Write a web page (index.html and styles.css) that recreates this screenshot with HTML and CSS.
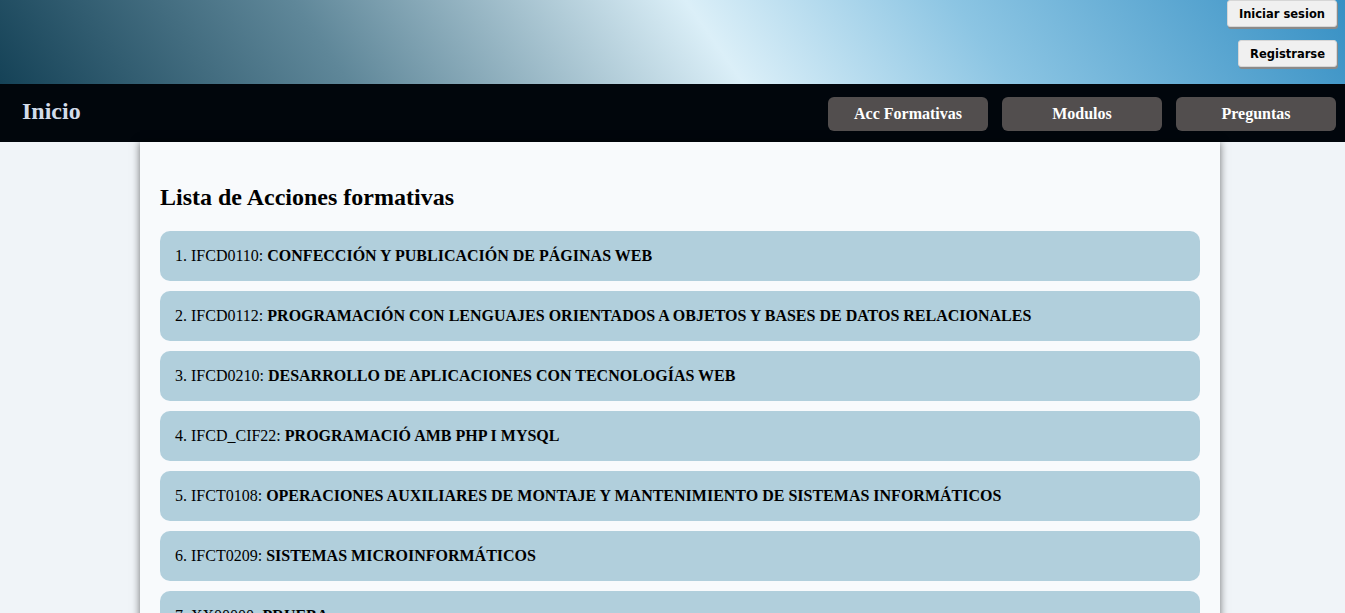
FILE: index.html
```html
<!DOCTYPE html>
<html lang="es">
<head>
<meta charset="utf-8">
<title>Acciones formativas</title>
<link rel="stylesheet" href="styles.css">
</head>
<body>
<header class="banner">
  <button class="auth-btn">Iniciar sesion</button>
  <button class="auth-btn">Registrarse</button>
</header>
<nav class="navbar">
  <a class="brand" href="#">Inicio</a>
  <div class="nav-links">
    <a class="nav-btn" href="#">Acc Formativas</a>
    <a class="nav-btn" href="#">Modulos</a>
    <a class="nav-btn" href="#">Preguntas</a>
  </div>
</nav>
<main class="content">
  <h2 class="title">Lista de Acciones formativas</h2>
  <ul class="list">
    <li class="item">1. IFCD0110: <b>CONFECCIÓN Y PUBLICACIÓN DE PÁGINAS WEB</b></li>
    <li class="item">2. IFCD0112: <b>PROGRAMACIÓN CON LENGUAJES ORIENTADOS A OBJETOS Y BASES DE DATOS RELACIONALES</b></li>
    <li class="item">3. IFCD0210: <b>DESARROLLO DE APLICACIONES CON TECNOLOGÍAS WEB</b></li>
    <li class="item">4. IFCD_CIF22: <b>PROGRAMACIÓ AMB PHP I MYSQL</b></li>
    <li class="item">5. IFCT0108: <b>OPERACIONES AUXILIARES DE MONTAJE Y MANTENIMIENTO DE SISTEMAS INFORMÁTICOS</b></li>
    <li class="item">6. IFCT0209: <b>SISTEMAS MICROINFORMÁTICOS</b></li>
    <li class="item">7. XX00000: <b>PRUEBA</b></li>
  </ul>
</main>
</body>
</html>
```
FILE: styles.css
```css
html, body {
  margin: 0;
  padding: 0;
}
body {
  background: #f0f4f8;
  font-family: "Liberation Serif", "Times New Roman", serif;
  color: #000;
}
.banner {
  height: 84px;
  box-sizing: border-box;
  padding: 0 8px 0 0;
  display: flex;
  flex-direction: column;
  align-items: flex-end;
  gap: 13px;
  background: linear-gradient(55deg, #154257 0%, #5f8799 25%, #dbeff8 53%, #8cc5e3 72%, #3790c4 100%);
}
.auth-btn {
  font-family: "DejaVu Sans", Verdana, sans-serif;
  font-weight: bold;
  font-size: 11.5px;
  height: 27px;
  padding: 0 11px;
  background: #f0f0f0;
  border: 1px solid #d6d6d6;
  border-radius: 3px;
  box-shadow: 1px 2px 0 #8a8a8a;
  color: #000;
}
.navbar {
  height: 58px;
  background: #01060c;
  display: flex;
  align-items: center;
  justify-content: space-between;
  padding: 0 9px 0 22px;
}
.brand {
  color: #d3dcea;
  font-weight: bold;
  font-size: 24px;
  text-decoration: none;
  margin-top: -4px;
}
.nav-links {
  display: flex;
  gap: 14px;
  margin-top: 2px;
}
.nav-btn {
  width: 160px;
  height: 34px;
  display: flex;
  align-items: center;
  justify-content: center;
  background: #524e4e;
  color: #fff;
  font-weight: bold;
  font-size: 16px;
  border-radius: 6px;
  text-decoration: none;
}
.content {
  width: 1080px;
  margin: 0 0 0 140px;
  box-sizing: border-box;
  padding: 40px 20px 20px;
  background: #f8fafc;
  box-shadow: 0 0 8px rgba(0, 0, 0, 0.55);
  min-height: 500px;
}
.title {
  margin: 0 0 19px;
  font-size: 24px;
  line-height: 30px;
}
.list {
  list-style: none;
  margin: 0;
  padding: 0;
  display: flex;
  flex-direction: column;
  gap: 10px;
}
.item {
  height: 50px;
  display: flex;
  align-items: center;
  gap: 4px;
  padding: 0 15px;
  background: #b1cfdc;
  border-radius: 10px;
  font-size: 16px;
}
.item b {
  font-weight: bold;
}
```
